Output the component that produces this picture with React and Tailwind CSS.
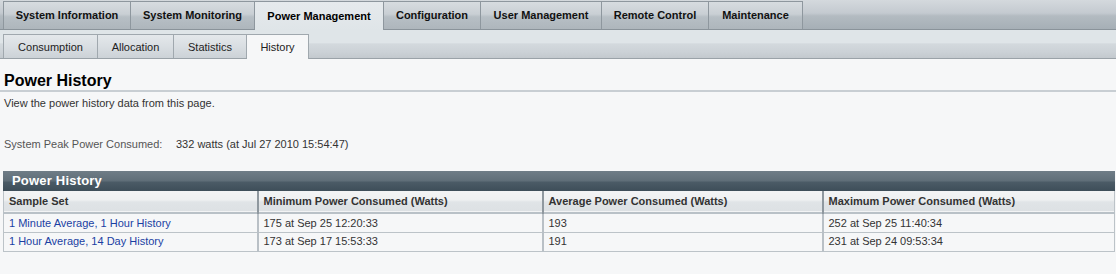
import React from 'react';

const mainTabs = [
  { label: 'System Information', w: 'w-[128px]' },
  { label: 'System Monitoring', w: 'w-[124px]' },
  { label: 'Power Management', w: 'w-[129px]', active: true },
  { label: 'Configuration', w: 'w-[97px]' },
  { label: 'User Management', w: 'w-[121px]' },
  { label: 'Remote Control', w: 'w-[107px]' },
  { label: 'Maintenance', w: 'w-[94px]' },
];

const subTabs = [
  { label: 'Consumption', w: 'w-[95px]' },
  { label: 'Allocation', w: 'w-[76px]' },
  { label: 'Statistics', w: 'w-[73px]' },
  { label: 'History', w: 'w-[62px]', active: true },
];

const rows = [
  ['1 Minute Average, 1 Hour History', '175 at Sep 25 12:20:33', '193', '252 at Sep 25 11:40:34'],
  ['1 Hour Average, 14 Day History', '173 at Sep 17 15:53:33', '191', '231 at Sep 24 09:53:34'],
];

export default function App() {
  return (
    <div className="w-[1116px] h-[274px] bg-[#f6f7f8] font-['Liberation_Sans',Arial,sans-serif] text-[#222] overflow-hidden">
      {/* Main tabs */}
      <div className="h-[30px] flex pl-[3px] border-b border-[#8a939a] bg-[linear-gradient(#d4d9dd,#c4cad0_45%,#b3bbc1_55%,#a6afb6)]">
        {mainTabs.map(t => (
          <div
            key={t.label}
            className={`${t.w} mt-[1px] flex items-center justify-center text-[11px] font-bold border-t border-r border-[#8e979e] first:border-l ${
              t.active
                ? 'h-[29px] -mb-px bg-[linear-gradient(#e6eaed,#dfe5e8)] text-black'
                : 'h-[28px] bg-[linear-gradient(#d7dce0,#c9cfd4_45%,#b7bfc5_55%,#aeb6bc)] text-[#111]'
            }`}
          >
            {t.label}
          </div>
        ))}
      </div>

      {/* Sub tabs */}
      <div className="h-[29px] flex items-end pl-[3px] border-b border-[#9aa2a8] bg-[linear-gradient(#dfe5e8,#dfe5e8_45%,#d3d9dd_50%,#cbd1d6_80%,#c3c9ce)]">
        {subTabs.map(t => (
          <div
            key={t.label}
            className={`${t.w} flex items-center justify-center pt-px text-[11px] border-t border-r border-[#a0a8ae] first:border-l ${
              t.active
                ? 'h-[25px] -mb-px bg-[#f6f7f8] text-[#222]'
                : 'h-[24px] bg-[linear-gradient(#e4e8eb,#d9dee2_50%,#ccd2d7)] text-[#222]'
            }`}
          >
            {t.label}
          </div>
        ))}
      </div>

      {/* Page heading */}
      <div className="pt-[13px]">
        <h1 className="px-[4px] text-[16px] leading-[18px] font-bold text-black border-b-2 border-[#c8ced3]">
          Power History
        </h1>
        <p className="px-[4px] mt-[5px] text-[11px] leading-[13px] text-[#333]">
          View the power history data from this page.
        </p>
        <div className="px-[4px] mt-[28px] text-[11px] leading-[13px] flex">
          <span className="text-[#555] w-[172px]">System Peak Power Consumed:</span>
          <span className="text-[#333]">332 watts (at Jul 27 2010 15:54:47)</span>
        </div>
      </div>

      {/* Table */}
      <div className="mt-[20px] ml-[3px] w-[1112px]">
        <div className="h-[20px] flex items-center pl-[9px] text-[13px] font-bold text-white tracking-[0.2px] bg-[linear-gradient(#6f7d87,#5f6e78_50%,#4b5b66_55%,#3e4e59)]">
          Power History
        </div>
        <table className="w-full border-collapse text-[11px] text-[#333] border-l border-r border-b border-[#bcc3c8]">
          <thead>
            <tr className="h-[22px] bg-[linear-gradient(#f3f4f5,#eef0f1_45%,#e0e4e7_55%,#dde1e4)] border-b-2 border-[#b9c1c7]">
              {['Sample Set', 'Minimum Power Consumed (Watts)', 'Average Power Consumed (Watts)', 'Maximum Power Consumed (Watts)'].map((h, i) => (
                <th
                  key={h}
                  className={`text-left font-bold px-[5px] py-0 text-[#333] ${i > 0 ? 'border-l-2 border-[#8f989f]' : ''} ${
                    ['w-[254px]', 'w-[285px]', 'w-[280px]', ''][i]
                  }`}
                >
                  {h}
                </th>
              ))}
            </tr>
          </thead>
          <tbody>
            {rows.map(r => (
              <tr key={r[0]} className="h-[19px] border-b border-[#bcc3c8] last:border-b-0">
                {r.map((c, i) => (
                  <td
                    key={i}
                    className={`px-[5px] py-0 ${i > 0 ? 'border-l-2 border-[#b9c0c6]' : ''} ${i === 0 ? 'text-[#1b3fa3]' : ''}`}
                  >
                    {c}
                  </td>
                ))}
              </tr>
            ))}
          </tbody>
        </table>
      </div>
    </div>
  );
}
